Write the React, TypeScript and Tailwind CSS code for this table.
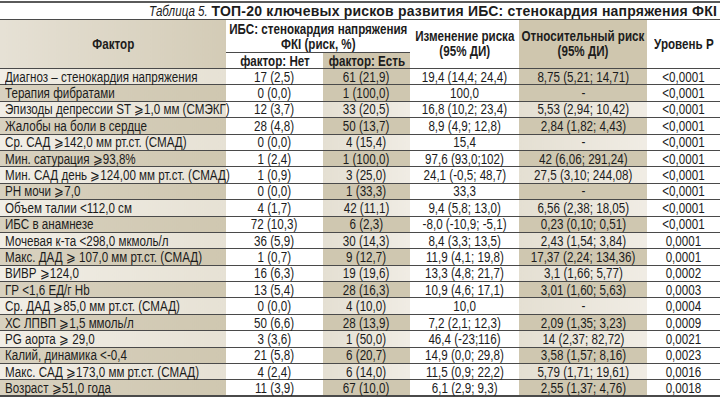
import React from 'react';

type Row = [string, string, string, string, string, string];

const rows: Row[] = [
  ['Диагноз – стенокардия напряжения', '17 (2,5)', '61 (21,9)', '19,4 (14,4; 24,4)', '8,75 (5,21; 14,71)', '<0,0001'],
  ['Терапия фибратами', '0 (0,0)', '1 (100,0)', '100,0', '-', '<0,0001'],
  ['Эпизоды депрессии ST ⩾1,0 мм (СМЭКГ)', '12 (3,7)', '33 (20,5)', '16,8 (10,2; 23,4)', '5,53 (2,94; 10,42)', '<0,0001'],
  ['Жалобы на боли в сердце', '28 (4,8)', '50 (13,7)', '8,9 (4,9; 12,8)', '2,84 (1,82; 4,43)', '<0,0001'],
  ['Ср. САД ⩾142,0 мм рт.ст. (СМАД)', '0 (0,0)', '4 (15,4)', '15,4', '-', '<0,0001'],
  ['Мин. сатурация ⩾93,8%', '1 (2,4)', '1 (100,0)', '97,6 (93,0;102)', '42 (6,06; 291,24)', '<0,0001'],
  ['Мин. САД день ⩾124,00 мм рт.ст. (СМАД)', '1 (0,9)', '3 (25,0)', '24,1 (-0,5; 48,7)', '27,5 (3,10; 244,08)', '<0,0001'],
  ['РН мочи ⩾7,0', '0 (0,0)', '1 (33,3)', '33,3', '-', '<0,0001'],
  ['Объем талии <112,0 см', '4 (1,7)', '42 (11,1)', '9,4 (5,8; 13,0)', '6,56 (2,38; 18,05)', '<0,0001'],
  ['ИБС в анамнезе', '72 (10,3)', '6 (2,3)', '-8,0 (-10,9; -5,1)', '0,23 (0,10; 0,51)', '<0,0001'],
  ['Мочевая к-та <298,0 мкмоль/л', '36 (5,9)', '30 (14,3)', '8,4 (3,3; 13,5)', '2,43 (1,54; 3,84)', '0,0001'],
  ['Макс. ДАД ⩾ 107,0 мм рт.ст. (СМАД)', '1 (0,7)', '9 (12,7)', '11,9 (4,1; 19,8)', '17,37 (2,24; 134,36)', '0,0001'],
  ['ВИВР ⩾124,0', '16 (6,3)', '19 (19,6)', '13,3 (4,8; 21,7)', '3,1 (1,66; 5,77)', '0,0002'],
  ['ГР <1,6 ЕД/г Hb', '13 (5,4)', '28 (16,3)', '10,9 (4,6; 17,1)', '3,01 (1,60; 5,63)', '0,0003'],
  ['Ср. ДАД ⩾85,0 мм рт.ст. (СМАД)', '0 (0,0)', '4 (10,0)', '10,0', '-', '0,0004'],
  ['ХС ЛПВП ⩾1,5 ммоль/л', '50 (6,6)', '28 (13,9)', '7,2 (2,1; 12,3)', '2,09 (1,35; 3,23)', '0,0009'],
  ['PG аорта ⩾ 29,0', '3 (3,6)', '1 (50,0)', '46,4 (-23;116)', '14 (2,37; 82,72)', '0,0021'],
  ['Калий, динамика <-0,4', '21 (5,8)', '6 (20,7)', '14,9 (0,0; 29,8)', '3,58 (1,57; 8,16)', '0,0023'],
  ['Макс. САД ⩾173,0 мм рт.ст. (СМАД)', '4 (2,4)', '6 (14,0)', '11,5 (0,9; 22,2)', '5,79 (1,71; 19,61)', '0,0016'],
  ['Возраст ⩾51,0 года', '11 (3,9)', '67 (10,0)', '6,1 (2,9; 9,3)', '2,55 (1,37; 4,76)', '0,0018'],
];

// the source uses a condensed face; Arial metrics squeezed horizontally stand in for it
function Narrow({ children, left }: { children: React.ReactNode; left?: boolean }) {
  return (
    <div className={`flex ${left ? 'justify-start pl-[5px]' : 'justify-center'}`}>
      <span className={`inline-block scale-x-[0.83] ${left ? 'origin-left' : 'origin-center'}`}>{children}</span>
    </div>
  );
}

const dark = 'bg-[#cfc7b0]';
const light = 'bg-gradient-to-r from-[#e4dfd2] to-[#f0ece4]';

export default function App() {
  return (
    <div
      className="w-[720px] h-[401px] bg-white text-[#1c1c1c] overflow-hidden whitespace-nowrap"
      style={{ fontFamily: '"Liberation Sans", Arial, sans-serif' }}
    >
      <div className="mt-[1px] border-t-2 border-[#5a5a5a] h-[18px] flex items-center justify-end pr-[3px] text-[14px] leading-none">
        <span className="inline-block italic scale-x-[0.83] origin-right">Таблица 5.</span>
        <span className="font-bold ml-[4px] tracking-[0.2px]">
          ТОП-20 ключевых рисков развития ИБС: стенокардия напряжения ФКI
        </span>
      </div>
      <table className="table-fixed border-collapse w-[720px] text-[14px] leading-none">
        <colgroup>
          <col className="w-[226px]" />
          <col className="w-[97px]" />
          <col className="w-[87px]" />
          <col className="w-[109px]" />
          <col className="w-[128px]" />
          <col className="w-[73px]" />
        </colgroup>
        <thead className="font-bold">
          <tr className="h-[31px] border-t-[1.5px] border-[#4a4a4a]">
            <th rowSpan={2} className="bg-gradient-to-r from-[#e6e1d5] to-[#d3cbb6]">
              <Narrow>Фактор</Narrow>
            </th>
            <th colSpan={2} className="bg-white leading-[15px] pt-[2px]">
              <Narrow>
                ИБС: стенокардия напряжения
                <br />
                <span className="block text-center">ФКI (риск, %)</span>
              </Narrow>
            </th>
            <th rowSpan={2} className="bg-white leading-[15px]">
              <Narrow>
                <span className="block text-center">Изменение риска</span>
                <span className="block text-center">(95% ДИ)</span>
              </Narrow>
            </th>
            <th rowSpan={2} className="bg-[#cfc6ae] leading-[15px]">
              <Narrow>
                <span className="block text-center">Относительный риск</span>
                <span className="block text-center">(95% ДИ)</span>
              </Narrow>
            </th>
            <th rowSpan={2} className="bg-white">
              <Narrow>Уровень P</Narrow>
            </th>
          </tr>
          <tr className="h-[16px]">
            <th className="bg-white border-t-[1.5px] border-[#4a4a4a]">
              <Narrow>фактор: Нет</Narrow>
            </th>
            <th className="bg-[#cfc6ae] border-t-[1.5px] border-[#4a4a4a]">
              <Narrow>фактор: Есть</Narrow>
            </th>
          </tr>
        </thead>
        <tbody>
          {rows.map((r, i) => {
            const shade = i === 0 || i % 2 === 1;
            const firstDark = i % 2 === 1;
            const last = i === rows.length - 1;
            return (
              <tr key={i} className={`h-[16.4px] border-t-[1.5px] border-[#4a4a4a] ${last ? 'border-b-2' : ''}`}>
                <td
                  className={
                    firstDark
                      ? 'bg-gradient-to-r from-[#d8d1bf] to-[#cfc7b0]'
                      : 'bg-gradient-to-r from-[#f1eee6] to-[#e6e1d4]'
                  }
                >
                  <Narrow left>{r[0]}</Narrow>
                </td>
                <td className="bg-white">
                  <Narrow>{r[1]}</Narrow>
                </td>
                <td className={shade ? dark : light}>
                  <Narrow>{r[2]}</Narrow>
                </td>
                <td className="bg-white">
                  <Narrow>{r[3]}</Narrow>
                </td>
                <td className={shade ? dark : light}>
                  <Narrow>{r[4]}</Narrow>
                </td>
                <td className="bg-white">
                  <Narrow>{r[5]}</Narrow>
                </td>
              </tr>
            );
          })}
        </tbody>
      </table>
    </div>
  );
}
